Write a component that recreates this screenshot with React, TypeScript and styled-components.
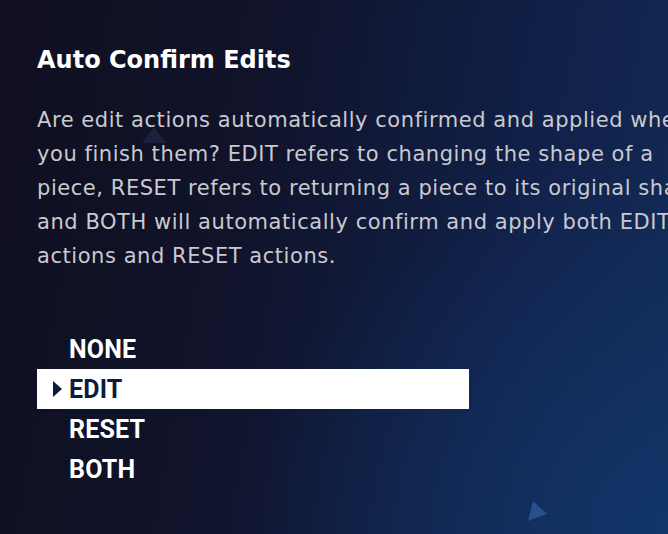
import React, { useState } from "react";
import styled, { createGlobalStyle } from "styled-components";

const options = ["NONE", "EDIT", "RESET", "BOTH"];

const lines = [
  "Are edit actions automatically confirmed and applied when",
  "you finish them? EDIT refers to changing the shape of a",
  "piece, RESET refers to returning a piece to its original shape,",
  "and BOTH will automatically confirm and apply both EDIT",
  "actions and RESET actions.",
];

const App = () => {
  const [selected, setSelected] = useState<string>("EDIT");

  return (
    <>
      <GlobalStyle />
      <Page>
        <DecoTop width="26" height="20" viewBox="0 0 26 20">
          <polygon points="13,2 25,18 1,18" fill="#2a3560" opacity="0.45" />
        </DecoTop>
        <DecoBottom width="22" height="22" viewBox="0 0 22 22">
          <polygon points="6,1 20,14 1,21" fill="#2d5b9c" opacity="0.75" />
        </DecoBottom>
        <Title>Auto Confirm Edits</Title>
        <Description>
          {lines.map((line) => (
            <Line key={line}>{line}</Line>
          ))}
        </Description>
        <OptionList>
          {options.map((opt) => (
            <OptionRow
              key={opt}
              $active={selected === opt}
              onClick={() => setSelected(opt)}
            >
              <ArrowSlot>
                {selected === opt && (
                  <svg width="9" height="16" viewBox="0 0 9 16">
                    <polygon points="0,0 9,8 0,16" fill="#0f1a3f" />
                  </svg>
                )}
              </ArrowSlot>
              {opt}
            </OptionRow>
          ))}
        </OptionList>
      </Page>
    </>
  );
};

const GlobalStyle = createGlobalStyle`
  html, body {
    margin: 0;
    padding: 0;
    width: 100%;
    height: 100%;
    overflow: hidden;
  }
  #root {
    height: 100%;
  }
`;

const Page = styled.div`
  position: relative;
  display: flex;
  flex-direction: column;
  box-sizing: border-box;
  width: 668px;
  height: 534px;
  overflow: hidden;
  padding: 42px 0 0 37px;
  background:
    radial-gradient(ellipse 420px 380px at 100% 100%, rgba(18, 58, 112, 0.75), rgba(18, 58, 112, 0) 100%),
    linear-gradient(100deg, #0f0f1f 0%, #10132a 35%, #11214a 75%, #122a55 100%);
  font-family: Roboto, "Liberation Sans", sans-serif;
`;

const DecoTop = styled.svg`
  position: absolute;
  left: 141px;
  top: 125px;
`;

const DecoBottom = styled.svg`
  position: absolute;
  left: 527px;
  top: 500px;
`;

const Title = styled.h1`
  margin: 0;
  font-family: "DejaVu Sans", sans-serif;
  font-size: 24px;
  line-height: 36px;
  font-weight: 700;
  color: #ffffff;
`;

const Description = styled.div`
  margin-top: 25px;
  width: 800px;
  font-family: "DejaVu Sans", sans-serif;
  font-size: 21px;
  letter-spacing: 0.55px;
  line-height: 34px;
  color: #c9c9cf;
`;

const Line = styled.div`
  white-space: nowrap;
`;

const OptionList = styled.div`
  display: flex;
  flex-direction: column;
  margin-top: 56px;
  width: 432px;
`;

const OptionRow = styled.div<{ $active: boolean }>`
  display: flex;
  align-items: center;
  height: 40px;
  padding-left: 16px;
  font-size: 25px;
  font-weight: 700;
  letter-spacing: 0.2px;
  color: ${(p) => (p.$active ? "#0f1a3f" : "#ffffff")};
  background: ${(p) => (p.$active ? "#ffffff" : "transparent")};
  cursor: pointer;
`;

const ArrowSlot = styled.span`
  display: flex;
  align-items: center;
  width: 16px;
  height: 16px;
`;

export default App;
